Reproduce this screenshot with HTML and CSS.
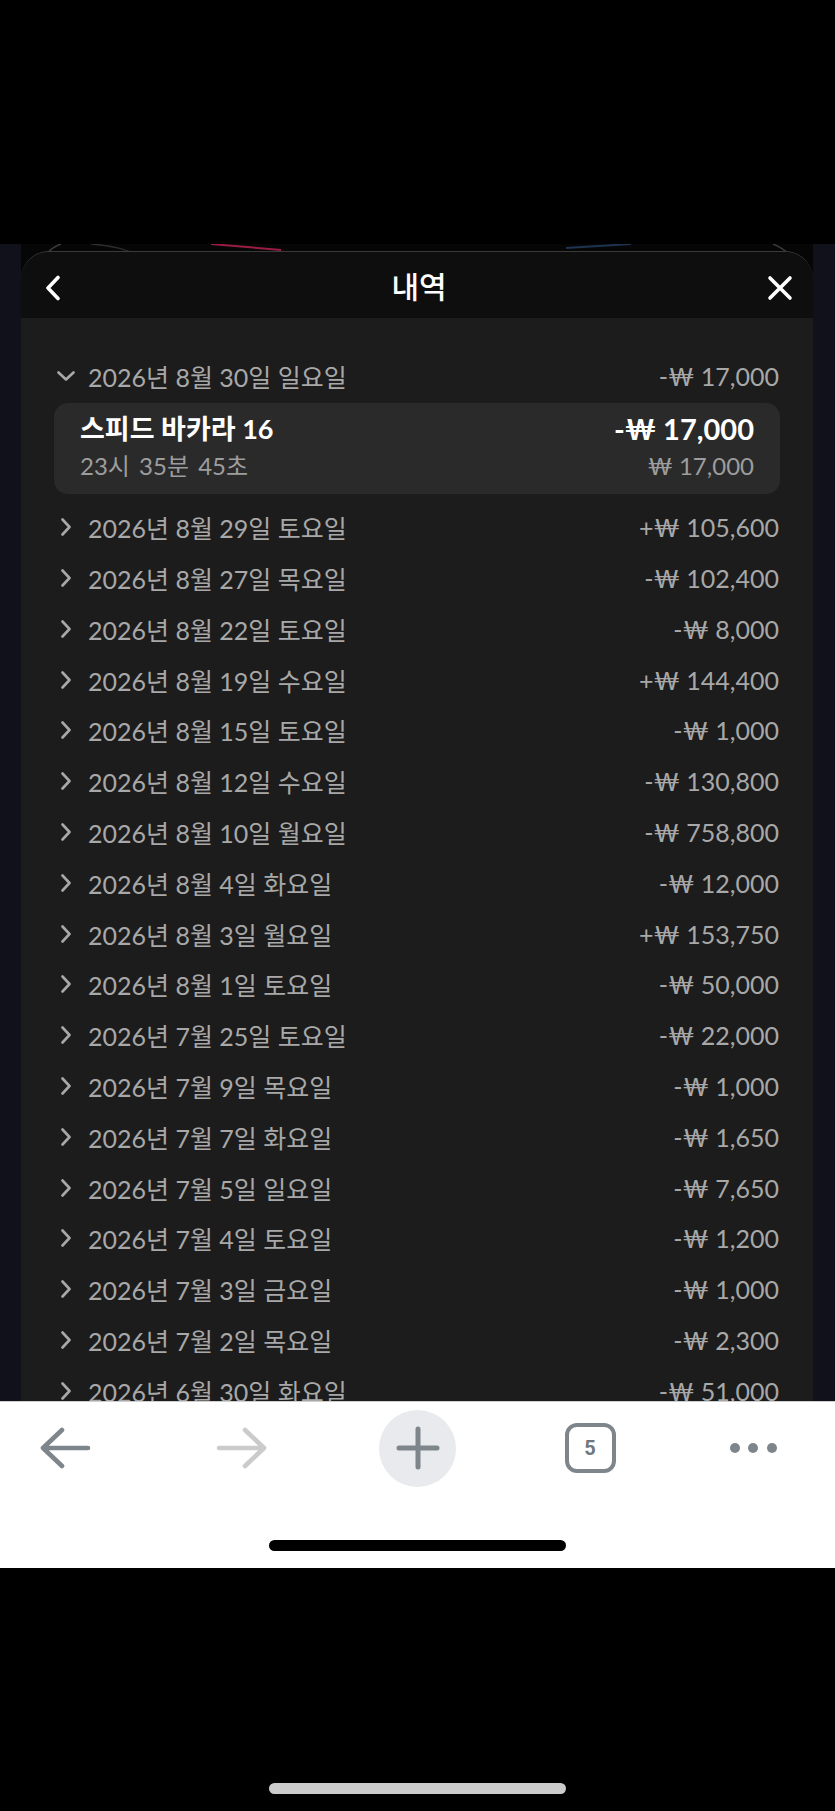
FILE: index.html
```html
<!DOCTYPE html>
<html lang="ko">
<head>
    <meta charset="UTF-8">
    <title>내역</title>
    <link rel="stylesheet" href="styles.css">
</head>
<body>
<div class="status"></div>

<div class="viewport">
    <div class="column">
        <!-- 뒤쪽 페이지 배너 일부 (시트 위 모서리로 보이는 부분) -->
        <svg class="backdrop-art" width="792" height="40" viewBox="0 0 792 40">
            <path d="M16 30 Q22 6 40 0" fill="none" stroke="#3b3b3b" stroke-width="1.5"/>
            <path d="M70 0 Q100 2 118 12" fill="none" stroke="#2c2c2c" stroke-width="1.5"/>
            <path d="M190 0 L260 6" fill="none" stroke="#9c1d44" stroke-width="2"/>
            <path d="M545 4 L610 0" fill="none" stroke="#1d3550" stroke-width="2"/>
            <path d="M752 0 Q772 8 782 30" fill="none" stroke="#3b3b3b" stroke-width="1.5"/>
        </svg>

        <div class="sheet">
            <div class="sheet-head">
                <svg class="head-back" width="16" height="26" viewBox="0 0 16 26">
                    <path d="M13 2.5 L3 13 L13 23.5" fill="none" stroke="#fff" stroke-width="3.6" stroke-linecap="round" stroke-linejoin="round"/>
                </svg>
                <h1 class="head-title">내역</h1>
                <svg class="head-close" width="26" height="26" viewBox="0 0 26 26">
                    <path d="M3 3 L23 23 M23 3 L3 23" fill="none" stroke="#fff" stroke-width="3.6" stroke-linecap="round"/>
                </svg>
            </div>

            <div class="history">
                <div class="day open">
                    <div class="day-row">
                        <span class="day-icon">
                            <svg width="18" height="10" viewBox="0 0 18 10"><path d="M1.5 1.5 L9 8.5 L16.5 1.5" fill="none" stroke="#a8a8a8" stroke-width="2.6" stroke-linecap="round" stroke-linejoin="round"/></svg>
                        </span>
                        <span class="day-date">2026년 8월 30일 일요일</span>
                        <span class="day-amount">-₩ 17,000</span>
                    </div>
                    <div class="bet-card">
                        <div class="bet-name">스피드 바카라 16</div>
                        <div class="bet-amount">-₩ 17,000</div>
                        <div class="bet-time">23시 35분 45초</div>
                        <div class="bet-stake">₩ 17,000</div>
                    </div>
                </div>

                <div class="day"><div class="day-row"><span class="day-icon"><svg width="10" height="18" viewBox="0 0 10 18"><path d="M1.5 1.5 L8.5 9 L1.5 16.5" fill="none" stroke="#a8a8a8" stroke-width="2.6" stroke-linecap="round" stroke-linejoin="round"/></svg></span><span class="day-date">2026년 8월 29일 토요일</span><span class="day-amount">+₩ 105,600</span></div></div>
                <div class="day"><div class="day-row"><span class="day-icon"><svg width="10" height="18" viewBox="0 0 10 18"><path d="M1.5 1.5 L8.5 9 L1.5 16.5" fill="none" stroke="#a8a8a8" stroke-width="2.6" stroke-linecap="round" stroke-linejoin="round"/></svg></span><span class="day-date">2026년 8월 27일 목요일</span><span class="day-amount">-₩ 102,400</span></div></div>
                <div class="day"><div class="day-row"><span class="day-icon"><svg width="10" height="18" viewBox="0 0 10 18"><path d="M1.5 1.5 L8.5 9 L1.5 16.5" fill="none" stroke="#a8a8a8" stroke-width="2.6" stroke-linecap="round" stroke-linejoin="round"/></svg></span><span class="day-date">2026년 8월 22일 토요일</span><span class="day-amount">-₩ 8,000</span></div></div>
                <div class="day"><div class="day-row"><span class="day-icon"><svg width="10" height="18" viewBox="0 0 10 18"><path d="M1.5 1.5 L8.5 9 L1.5 16.5" fill="none" stroke="#a8a8a8" stroke-width="2.6" stroke-linecap="round" stroke-linejoin="round"/></svg></span><span class="day-date">2026년 8월 19일 수요일</span><span class="day-amount">+₩ 144,400</span></div></div>
                <div class="day"><div class="day-row"><span class="day-icon"><svg width="10" height="18" viewBox="0 0 10 18"><path d="M1.5 1.5 L8.5 9 L1.5 16.5" fill="none" stroke="#a8a8a8" stroke-width="2.6" stroke-linecap="round" stroke-linejoin="round"/></svg></span><span class="day-date">2026년 8월 15일 토요일</span><span class="day-amount">-₩ 1,000</span></div></div>
                <div class="day"><div class="day-row"><span class="day-icon"><svg width="10" height="18" viewBox="0 0 10 18"><path d="M1.5 1.5 L8.5 9 L1.5 16.5" fill="none" stroke="#a8a8a8" stroke-width="2.6" stroke-linecap="round" stroke-linejoin="round"/></svg></span><span class="day-date">2026년 8월 12일 수요일</span><span class="day-amount">-₩ 130,800</span></div></div>
                <div class="day"><div class="day-row"><span class="day-icon"><svg width="10" height="18" viewBox="0 0 10 18"><path d="M1.5 1.5 L8.5 9 L1.5 16.5" fill="none" stroke="#a8a8a8" stroke-width="2.6" stroke-linecap="round" stroke-linejoin="round"/></svg></span><span class="day-date">2026년 8월 10일 월요일</span><span class="day-amount">-₩ 758,800</span></div></div>
                <div class="day"><div class="day-row"><span class="day-icon"><svg width="10" height="18" viewBox="0 0 10 18"><path d="M1.5 1.5 L8.5 9 L1.5 16.5" fill="none" stroke="#a8a8a8" stroke-width="2.6" stroke-linecap="round" stroke-linejoin="round"/></svg></span><span class="day-date">2026년 8월 4일 화요일</span><span class="day-amount">-₩ 12,000</span></div></div>
                <div class="day"><div class="day-row"><span class="day-icon"><svg width="10" height="18" viewBox="0 0 10 18"><path d="M1.5 1.5 L8.5 9 L1.5 16.5" fill="none" stroke="#a8a8a8" stroke-width="2.6" stroke-linecap="round" stroke-linejoin="round"/></svg></span><span class="day-date">2026년 8월 3일 월요일</span><span class="day-amount">+₩ 153,750</span></div></div>
                <div class="day"><div class="day-row"><span class="day-icon"><svg width="10" height="18" viewBox="0 0 10 18"><path d="M1.5 1.5 L8.5 9 L1.5 16.5" fill="none" stroke="#a8a8a8" stroke-width="2.6" stroke-linecap="round" stroke-linejoin="round"/></svg></span><span class="day-date">2026년 8월 1일 토요일</span><span class="day-amount">-₩ 50,000</span></div></div>
                <div class="day"><div class="day-row"><span class="day-icon"><svg width="10" height="18" viewBox="0 0 10 18"><path d="M1.5 1.5 L8.5 9 L1.5 16.5" fill="none" stroke="#a8a8a8" stroke-width="2.6" stroke-linecap="round" stroke-linejoin="round"/></svg></span><span class="day-date">2026년 7월 25일 토요일</span><span class="day-amount">-₩ 22,000</span></div></div>
                <div class="day"><div class="day-row"><span class="day-icon"><svg width="10" height="18" viewBox="0 0 10 18"><path d="M1.5 1.5 L8.5 9 L1.5 16.5" fill="none" stroke="#a8a8a8" stroke-width="2.6" stroke-linecap="round" stroke-linejoin="round"/></svg></span><span class="day-date">2026년 7월 9일 목요일</span><span class="day-amount">-₩ 1,000</span></div></div>
                <div class="day"><div class="day-row"><span class="day-icon"><svg width="10" height="18" viewBox="0 0 10 18"><path d="M1.5 1.5 L8.5 9 L1.5 16.5" fill="none" stroke="#a8a8a8" stroke-width="2.6" stroke-linecap="round" stroke-linejoin="round"/></svg></span><span class="day-date">2026년 7월 7일 화요일</span><span class="day-amount">-₩ 1,650</span></div></div>
                <div class="day"><div class="day-row"><span class="day-icon"><svg width="10" height="18" viewBox="0 0 10 18"><path d="M1.5 1.5 L8.5 9 L1.5 16.5" fill="none" stroke="#a8a8a8" stroke-width="2.6" stroke-linecap="round" stroke-linejoin="round"/></svg></span><span class="day-date">2026년 7월 5일 일요일</span><span class="day-amount">-₩ 7,650</span></div></div>
                <div class="day"><div class="day-row"><span class="day-icon"><svg width="10" height="18" viewBox="0 0 10 18"><path d="M1.5 1.5 L8.5 9 L1.5 16.5" fill="none" stroke="#a8a8a8" stroke-width="2.6" stroke-linecap="round" stroke-linejoin="round"/></svg></span><span class="day-date">2026년 7월 4일 토요일</span><span class="day-amount">-₩ 1,200</span></div></div>
                <div class="day"><div class="day-row"><span class="day-icon"><svg width="10" height="18" viewBox="0 0 10 18"><path d="M1.5 1.5 L8.5 9 L1.5 16.5" fill="none" stroke="#a8a8a8" stroke-width="2.6" stroke-linecap="round" stroke-linejoin="round"/></svg></span><span class="day-date">2026년 7월 3일 금요일</span><span class="day-amount">-₩ 1,000</span></div></div>
                <div class="day"><div class="day-row"><span class="day-icon"><svg width="10" height="18" viewBox="0 0 10 18"><path d="M1.5 1.5 L8.5 9 L1.5 16.5" fill="none" stroke="#a8a8a8" stroke-width="2.6" stroke-linecap="round" stroke-linejoin="round"/></svg></span><span class="day-date">2026년 7월 2일 목요일</span><span class="day-amount">-₩ 2,300</span></div></div>
                <div class="day"><div class="day-row"><span class="day-icon"><svg width="10" height="18" viewBox="0 0 10 18"><path d="M1.5 1.5 L8.5 9 L1.5 16.5" fill="none" stroke="#a8a8a8" stroke-width="2.6" stroke-linecap="round" stroke-linejoin="round"/></svg></span><span class="day-date">2026년 6월 30일 화요일</span><span class="day-amount">-₩ 51,000</span></div></div>
            </div>
        </div>
    </div>
</div>

<!-- 브라우저 하단 툴바 -->
<div class="browser-bar">
    <div class="bar-icons">
        <svg class="bar-back" width="52" height="42" viewBox="0 0 52 42">
            <path d="M3 21 H48 M22 3 L3 21 L22 39" fill="none" stroke="#7f868b" stroke-width="4.6" stroke-linecap="round" stroke-linejoin="round"/>
        </svg>
        <svg class="bar-fwd" width="52" height="42" viewBox="0 0 52 42">
            <path d="M3 21 H48 M29 3 L48 21 L29 39" fill="none" stroke="#cbcbcb" stroke-width="4.6" stroke-linecap="round" stroke-linejoin="round"/>
        </svg>
        <div class="bar-new">
            <svg width="44" height="44" viewBox="0 0 44 44">
                <path d="M22 3 V41 M3 22 H41" fill="none" stroke="#7f868b" stroke-width="5" stroke-linecap="round"/>
            </svg>
        </div>
        <div class="bar-tabs">5</div>
        <div class="bar-more"><i></i><i></i><i></i></div>
    </div>
    <div class="home-indicator"></div>
</div>

<div class="bottom">
    <div class="home-indicator light"></div>
</div>
</body>
</html>
```

FILE: styles.css
```css
* {
    margin: 0;
    padding: 0;
    box-sizing: border-box;
}

body {
    width: 835px;
    background: #000;
    font-family: "Lato", "Noto Sans CJK KR", sans-serif;
}

.status {
    height: 244px;
    background: #000;
}

/*뒤쪽 페이지 + 내역 시트*/
.viewport {
    height: 1157px;
    padding: 0 22px 0 21px;
    background: #10111b;
    overflow: hidden;
}

.column {
    position: relative;
    height: 100%;
    padding-top: 7px;
    background: #060606;
}

.backdrop-art {
    position: absolute;
    top: 0;
    left: 0;
}

.sheet {
    position: relative;
    height: 100%;
    border-top: 1px solid #3a3a3a;
    border-radius: 28px 28px 0 0;
    background: #1c1c1c;
    overflow: hidden;
}

.sheet-head {
    height: 66px;
    display: grid;
    grid-template-columns: 1fr auto 1fr;
    align-items: center;
    padding: 0 20px 0 24px;
    background: #0e0e0e;
}

.head-back {
    margin-top: 6px;
}

.head-close {
    justify-self: end;
    margin-top: 6px;
}

.head-title {
    font-size: 30px;
    font-weight: 500;
    line-height: 1;
    color: #fff;
    font-family: "Noto Sans CJK KR", sans-serif;
}

.history {
    padding: 33px 33px 0 33px;
}

.day-row {
    display: flex;
    align-items: center;
    height: 50.8px;
    font-size: 25px;
    color: #a8a8a8;
    white-space: nowrap;
}

.day-icon {
    width: 24px;
    display: flex;
    justify-content: center;
    margin-right: 10px;
}

.day-amount {
    margin-left: auto;
    padding-right: 1px;
}

.bet-card {
    display: grid;
    grid-template-columns: 1fr auto;
    row-gap: 7px;
    margin: 1px 0 8px;
    padding: 11.5px 26px 12.5px;
    border-radius: 14px;
    background: #2a2a2a;
    line-height: 30px;
}

.bet-name,
.bet-amount {
    font-size: 27px;
    font-weight: 700;
    color: #fff;
}

.bet-amount {
    font-size: 29px;
    text-align: right;
}

.bet-time,
.bet-stake {
    font-size: 24px;
    color: #9d9d9d;
}

.bet-time {
    word-spacing: 3px;
}

.bet-stake {
    text-align: right;
}

/*브라우저 툴바*/
.browser-bar {
    height: 167px;
    border-top: 1px solid #cfcfcf;
    background: #fff;
}

.bar-icons {
    height: 92px;
    display: grid;
    grid-template-columns: 154px 176px 175px 170px 1fr;
    align-items: center;
}

.bar-back {
    margin-left: 40px;
}

.bar-fwd {
    justify-self: center;
}

.bar-new {
    justify-self: center;
    width: 77px;
    height: 77px;
    border-radius: 50%;
    background: #e9eaed;
    display: flex;
    align-items: center;
    justify-content: center;
}

.bar-tabs {
    justify-self: center;
    width: 51px;
    height: 50px;
    border: 4px solid #7f868b;
    border-radius: 12px;
    font: 700 20px/42px "Roboto", sans-serif;
    color: #70777c;
    text-align: center;
}

.bar-more {
    justify-self: center;
    display: flex;
    gap: 8.5px;
    margin-right: 4px;
}

.bar-more i {
    width: 10px;
    height: 10px;
    border-radius: 50%;
    background: #7f868b;
}

.home-indicator {
    width: 297px;
    height: 11px;
    margin: 46px auto 0;
    border-radius: 6px;
    background: #000;
}

.bottom {
    height: 243px;
    padding-top: 215px;
    background: #000;
}

.home-indicator.light {
    margin-top: 0;
    background: #cbcbcb;
}
```
